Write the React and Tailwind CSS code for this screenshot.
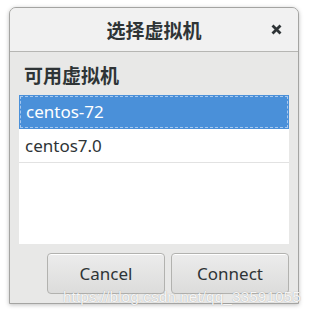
import React from "react";

const App = () => {
  return (
    <div className="w-[318px] h-[315px] bg-white relative overflow-hidden" style={{ fontFamily: '"Noto Sans", "DejaVu Sans", "Noto Sans CJK SC", sans-serif' }}>
      <div className="absolute left-[9px] top-[7px] w-[290px] h-[297px] flex flex-col rounded-t-[7px] border border-[#a4a4a2] shadow-[0_1px_4px_rgba(0,0,0,0.25)] bg-[#e8e8e7] overflow-hidden">
        {/* header */}
        <div className="h-[44px] shrink-0 flex items-center justify-center relative bg-[#f1f1f1] border-b border-[#b6b6b3]">
          <span className="text-[19px] font-bold text-[#2e3436] leading-none" style={{ fontFamily: '"Noto Sans CJK SC", sans-serif' }}>选择虚拟机</span>
          <span className="absolute right-[16px] top-[16px]">
            <svg width="11" height="11" viewBox="0 0 11 11">
              <path d="M1.5 1.5 L9.5 9.5 M9.5 1.5 L1.5 9.5" stroke="#2e3436" strokeWidth="2.8" strokeLinecap="butt" />
            </svg>
          </span>
        </div>
        {/* body */}
        <div className="flex-1 flex flex-col px-[9px] pt-[11px] pb-[9px]">
          <p className="text-[19px] font-bold text-[#2e3436] pl-[5px] leading-[24px]" style={{ fontFamily: '"Noto Sans CJK SC", sans-serif' }}>可用虚拟机</p>
          <div className="mt-[8px] h-[149px] bg-white flex flex-col">
            <div className="h-[34px] bg-[#4a90d9] flex items-center px-[1px] py-[1px]">
              <div className="w-full h-full border border-dashed border-[#a8c8ee] flex items-center pl-[5px] text-[17px] text-white">centos-72</div>
            </div>
            <div className="h-[34px] flex items-center pl-[6px] text-[17px] text-[#2e3436] border-b border-[#e2e2e2]">centos7.0</div>
          </div>
          <div className="mt-[9px] flex justify-end gap-[6px]">
            <button className="w-[118px] h-[41px] rounded-[4px] border border-[#b2b2af] bg-gradient-to-b from-[#ececec] to-[#dcdcdb] text-[17px] text-[#2e3436] shadow-[inset_0_1px_0_white]">Cancel</button>
            <button className="w-[118px] h-[41px] rounded-[4px] border border-[#b2b2af] bg-gradient-to-b from-[#ececec] to-[#dcdcdb] text-[17px] text-[#2e3436] shadow-[inset_0_1px_0_white]">Connect</button>
          </div>
        </div>
      </div>
      <span className="absolute left-[63px] top-[287px] text-[15.5px] leading-[20px] text-white/90 whitespace-nowrap" style={{ fontFamily: '"Liberation Sans", sans-serif', textShadow: "0 0 1px rgba(0,0,0,0.35)" }}>https://blog.csdn.net/qq_33591055</span>
    </div>
  );
};

export default App;
